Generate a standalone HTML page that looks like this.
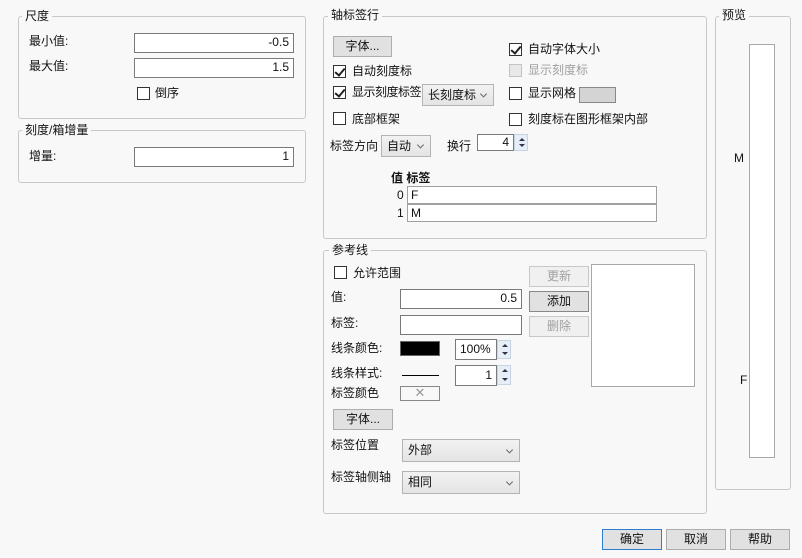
<!DOCTYPE html>
<html><head><meta charset="utf-8"><style>
*{box-sizing:border-box;margin:0;padding:0}
body{width:802px;height:558px;background:#f8f8f8;font-family:"Liberation Sans","Noto Sans CJK SC",sans-serif;font-size:12px;color:#111;position:relative;overflow:hidden}
.a{position:absolute}
.grp{position:absolute;border:1px solid #c8c8c8;border-radius:3px}
.ttl{position:absolute;background:#f8f8f8;padding:0 3px;line-height:14px;font-size:12px}
.in{position:absolute;background:#fff;border:1px solid #7a7a7a;text-align:right;padding-right:4px;line-height:17px}
.cb{position:absolute;width:13px;height:13px;border:1px solid #333;background:#fff}
.cb.on::after{content:"";position:absolute;left:3px;top:0px;width:4px;height:8px;border:solid #222;border-width:0 2px 2px 0;transform:rotate(40deg)}
.cb.dis{border-color:#c4c4c4;background:#e8e8e8}
.btn{position:absolute;background:#e1e1e1;border:1px solid #adadad;text-align:center;line-height:18px}
.btn.dis{color:#a0a0a0;background:#f0f0f0;border-color:#c8c8c8}
.dd{position:absolute;background:linear-gradient(#f2f2f2,#e4e4e4);border:1px solid #b4b4b4;padding-left:5px}
.dd::after{content:"";position:absolute;right:7px;top:50%;width:4px;height:4px;border:solid #666;border-width:0 1px 1px 0;transform:translateY(-70%) rotate(45deg)}
.sp{position:absolute;width:14px;background:#e6eef8;border:1px solid #c8d4e4}
.sp::before,.sp::after{content:"";position:absolute;left:4px;border-left:3px solid transparent;border-right:3px solid transparent}
.sp::before{top:3px;border-bottom:3px solid #334}
.sp::after{bottom:3px;border-top:3px solid #334}
.t{position:absolute;line-height:14px;white-space:nowrap}
</style></head><body>

<div class="grp" style="left:18px;top:16px;width:288px;height:103px"></div>
<div class="ttl" style="left:22px;top:9px">尺度</div>
<div class="t" style="left:29px;top:34px">最小值:</div>
<div class="in" style="left:134px;top:33px;width:160px;height:20px">-0.5</div>
<div class="t" style="left:29px;top:59px">最大值:</div>
<div class="in" style="left:134px;top:58px;width:160px;height:20px">1.5</div>
<div class="cb" style="left:137px;top:87px"></div>
<div class="t" style="left:155px;top:86px">倒序</div>

<div class="grp" style="left:18px;top:130px;width:288px;height:53px"></div>
<div class="ttl" style="left:22px;top:123px">刻度/箱增量</div>
<div class="t" style="left:29px;top:149px">增量:</div>
<div class="in" style="left:134px;top:147px;width:160px;height:20px">1</div>

<div class="grp" style="left:323px;top:16px;width:384px;height:223px"></div>
<div class="ttl" style="left:328px;top:8px">轴标签行</div>
<div class="btn" style="left:333px;top:36px;width:59px;height:21px">字体...</div>
<div class="cb on" style="left:333px;top:65px"></div><div class="t" style="left:352px;top:64px">自动刻度标</div>
<div class="cb on" style="left:333px;top:86px"></div><div class="t" style="left:352px;top:85px;letter-spacing:-0.5px">显示刻度标签</div>
<div class="dd" style="left:422px;top:84px;width:72px;height:22px;line-height:20px">长刻度标</div>
<div class="cb" style="left:333px;top:112px"></div><div class="t" style="left:352px;top:112px">底部框架</div>
<div class="t" style="left:330px;top:139px">标签方向</div>
<div class="dd" style="left:381px;top:135px;width:50px;height:22px;line-height:20px">自动</div>
<div class="t" style="left:447px;top:139px">换行</div>
<div class="in" style="left:477px;top:134px;width:37px;height:17px;line-height:15px">4</div>
<div class="sp" style="left:514px;top:134px;height:17px"></div>
<div class="cb on" style="left:509px;top:43px"></div><div class="t" style="left:528px;top:42px">自动字体大小</div>
<div class="cb dis" style="left:509px;top:64px"></div><div class="t" style="left:528px;top:63px;color:#a0a0a0">显示刻度标</div>
<div class="cb" style="left:509px;top:87px"></div><div class="t" style="left:528px;top:86px">显示网格</div>
<div class="a" style="left:579px;top:87px;width:37px;height:16px;background:#d4d4d4;border:1px solid #888"></div>
<div class="cb" style="left:509px;top:113px"></div><div class="t" style="left:528px;top:112px">刻度标在图形框架内部</div>
<div class="t" style="left:391px;top:171px;font-weight:bold">值 标签</div>
<div class="t" style="left:397px;top:188px">0</div>
<div class="t" style="left:397px;top:206px">1</div>
<div class="in" style="left:407px;top:186px;width:250px;height:18px;text-align:left;padding-left:3px;border-color:#a0a0a0;line-height:16px">F</div>
<div class="in" style="left:407px;top:204px;width:250px;height:18px;text-align:left;padding-left:3px;border-color:#a0a0a0;line-height:16px">M</div>

<div class="grp" style="left:323px;top:250px;width:384px;height:264px"></div>
<div class="ttl" style="left:329px;top:243px">参考线</div>
<div class="cb" style="left:334px;top:266px"></div><div class="t" style="left:353px;top:266px">允许范围</div>
<div class="t" style="left:331px;top:290px">值:</div>
<div class="in" style="left:400px;top:289px;width:122px;height:20px">0.5</div>
<div class="t" style="left:331px;top:316px">标签:</div>
<div class="in" style="left:400px;top:315px;width:122px;height:20px"></div>
<div class="t" style="left:331px;top:341px">线条颜色:</div>
<div class="a" style="left:400px;top:341px;width:40px;height:15px;background:#000;border:1px solid #666"></div>
<div class="in" style="left:455px;top:339px;width:42px;height:21px;text-align:left;padding-left:4px;line-height:18px">100%</div>
<div class="sp" style="left:497px;top:340px;height:19px"></div>
<div class="t" style="left:331px;top:366px">线条样式:</div>
<div class="a" style="left:402px;top:375px;width:37px;height:1px;background:#000"></div>
<div class="in" style="left:455px;top:365px;width:42px;height:21px;line-height:18px">1</div>
<div class="sp" style="left:497px;top:365px;height:20px"></div>
<div class="t" style="left:331px;top:386px">标签颜色</div>
<div class="a" style="left:400px;top:386px;width:40px;height:15px;background:#f8f8f8;border:1px solid #888;text-align:center;line-height:12px;color:#999;font-size:13px">✕</div>
<div class="btn" style="left:333px;top:409px;width:60px;height:21px">字体...</div>
<div class="t" style="left:331px;top:438px">标签位置</div>
<div class="dd" style="left:402px;top:439px;width:118px;height:23px;line-height:21px">外部</div>
<div class="t" style="left:331px;top:470px">标签轴侧轴</div>
<div class="dd" style="left:402px;top:471px;width:118px;height:23px;line-height:21px">相同</div>
<div class="btn dis" style="left:529px;top:266px;width:60px;height:21px">更新</div>
<div class="btn" style="left:529px;top:291px;width:60px;height:21px;border-color:#888">添加</div>
<div class="btn dis" style="left:529px;top:316px;width:60px;height:21px">删除</div>
<div class="a" style="left:591px;top:264px;width:104px;height:123px;background:#fff;border:1px solid #a8a8a8"></div>

<div class="grp" style="left:715px;top:16px;width:76px;height:474px"></div>
<div class="ttl" style="left:719px;top:8px">预览</div>
<div class="a" style="left:749px;top:44px;width:26px;height:414px;background:#fff;border:1px solid #a8a8a8"></div>
<div class="t" style="left:734px;top:151px">M</div>
<div class="t" style="left:740px;top:373px">F</div>

<div class="btn" style="left:602px;top:529px;width:60px;height:21px;border-color:#2b7fd0">确定</div>
<div class="btn" style="left:666px;top:529px;width:60px;height:21px">取消</div>
<div class="btn" style="left:730px;top:529px;width:60px;height:21px">帮助</div>
</body></html>
